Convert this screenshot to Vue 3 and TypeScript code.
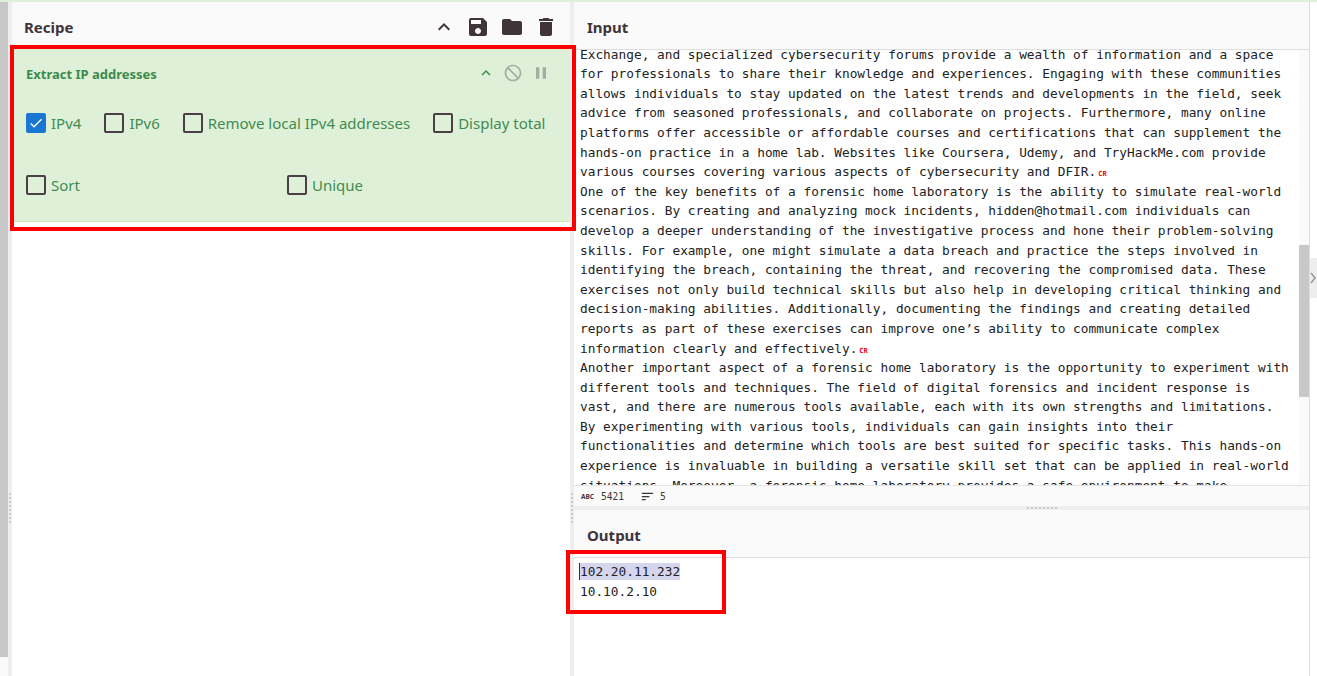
<script setup lang="ts">
const lines: { t: string; cr?: boolean }[] = [
  { t: 'Exchange, and specialized cybersecurity forums provide a wealth of information and a space' },
  { t: 'for professionals to share their knowledge and experiences. Engaging with these communities' },
  { t: 'allows individuals to stay updated on the latest trends and developments in the field, seek' },
  { t: 'advice from seasoned professionals, and collaborate on projects. Furthermore, many online' },
  { t: 'platforms offer accessible or affordable courses and certifications that can supplement the' },
  { t: 'hands-on practice in a home lab. Websites like Coursera, Udemy, and TryHackMe.com provide' },
  { t: 'various courses covering various aspects of cybersecurity and DFIR.', cr: true },
  { t: 'One of the key benefits of a forensic home laboratory is the ability to simulate real-world' },
  { t: 'scenarios. By creating and analyzing mock incidents, hidden@hotmail.com individuals can' },
  { t: 'develop a deeper understanding of the investigative process and hone their problem-solving' },
  { t: 'skills. For example, one might simulate a data breach and practice the steps involved in' },
  { t: 'identifying the breach, containing the threat, and recovering the compromised data. These' },
  { t: 'exercises not only build technical skills but also help in developing critical thinking and' },
  { t: 'decision-making abilities. Additionally, documenting the findings and creating detailed' },
  { t: 'reports as part of these exercises can improve one’s ability to communicate complex' },
  { t: 'information clearly and effectively.', cr: true },
  { t: 'Another important aspect of a forensic home laboratory is the opportunity to experiment with' },
  { t: 'different tools and techniques. The field of digital forensics and incident response is' },
  { t: 'vast, and there are numerous tools available, each with its own strengths and limitations.' },
  { t: 'By experimenting with various tools, individuals can gain insights into their' },
  { t: 'functionalities and determine which tools are best suited for specific tasks. This hands-on' },
  { t: 'experience is invaluable in building a versatile skill set that can be applied in real-world' },
  { t: 'situations. Moreover, a forensic home laboratory provides a safe environment to make' }
]
const rowOne = [
  { label: 'IPv4', checked: true },
  { label: 'IPv6', checked: false },
  { label: 'Remove local IPv4 addresses', checked: false },
  { label: 'Display total', checked: false }
]
const rowTwo = ['Sort', 'Unique']
const dots = [0, 1, 2, 3, 4, 5, 6, 7]
</script>

<template>
  <div class="page">
    <div class="strip">
      <div class="thumb"></div>
    </div>
    <div class="vgutter left">
      <i v-for="d in dots" :key="d"></i>
    </div>
    <section class="recipe">
      <header class="head">
        <h2>Recipe</h2>
        <div class="head-icons">
          <svg class="ic-chev" viewBox="0 0 24 24"><path d="M7.41 15.41L12 10.83l4.59 4.58L18 14l-6-6-6 6z" /></svg>
          <svg viewBox="0 0 24 24"><path d="M17 3H5c-1.11 0-2 .9-2 2v14c0 1.1.89 2 2 2h14c1.1 0 2-.9 2-2V7l-4-4zm-5 16c-1.66 0-3-1.34-3-3s1.34-3 3-3 3 1.34 3 3-1.34 3-3 3zm3-10H5V5h10v4z" /></svg>
          <svg viewBox="0 0 24 24"><path d="M10 4H4c-1.1 0-1.99.9-1.99 2L2 18c0 1.1.9 2 2 2h16c1.1 0 2-.9 2-2V8c0-1.1-.9-2-2-2h-8l-2-2z" /></svg>
          <svg viewBox="0 0 24 24"><path d="M6 19c0 1.1.9 2 2 2h8c1.1 0 2-.9 2-2V7H6v12zM19 4h-3.5l-1-1h-5l-1 1H5v2h14V4z" /></svg>
        </div>
      </header>
      <div class="op">
        <div class="op-head">
          <h3>Extract IP addresses</h3>
          <div class="op-icons">
            <svg class="up" viewBox="0 0 24 24"><path d="M7.41 15.41L12 10.83l4.59 4.58L18 14l-6-6-6 6z" /></svg>
            <svg viewBox="0 0 24 24"><path d="M12 2C6.48 2 2 6.48 2 12s4.48 10 10 10 10-4.48 10-10S17.52 2 12 2zm0 18c-4.42 0-8-3.58-8-8 0-1.85.63-3.55 1.69-4.9L16.9 18.31C15.55 19.37 13.85 20 12 20zm6.31-3.1L7.1 5.69C8.45 4.63 10.15 4 12 4c4.42 0 8 3.58 8 8 0 1.85-.63 3.55-1.69 4.9z" /></svg>
            <svg viewBox="0 0 24 24"><path d="M6 19h4V5H6v14zm8-14v14h4V5h-4z" /></svg>
          </div>
        </div>
        <div class="row-one">
          <label v-for="o in rowOne" :key="o.label" class="check">
            <span class="box" :class="{ on: o.checked }">
              <svg v-if="o.checked" viewBox="0 0 24 24"><path d="M9 16.17L4.83 12l-1.42 1.41L9 19 21 7l-1.41-1.41z" /></svg>
            </span>
            {{ o.label }}
          </label>
        </div>
        <div class="row-two">
          <label v-for="o in rowTwo" :key="o" class="check">
            <span class="box"></span>
            {{ o }}
          </label>
        </div>
      </div>
    </section>
    <div class="vgutter mid">
      <i v-for="d in dots" :key="d"></i>
    </div>
    <main class="io">
      <div class="input">
        <header class="head io-head"><h2>Input</h2></header>
        <div class="input-body">
          <div class="text-clip">
            <div class="text">
              <div v-for="(l, i) in lines" :key="i" class="line">{{ l.t }}<span v-if="l.cr" class="cr">CR</span></div>
            </div>
          </div>
          <div class="scroll"><div class="scroll-thumb"></div></div>
        </div>
        <footer class="status">
          <span class="abc">ABC</span>
          <span class="num">5421</span>
          <svg class="sort" viewBox="0 0 24 24"><path d="M3 18h6v-2H3v2zM3 6v2h18V6H3zm0 7h12v-2H3v2z" /></svg>
          <span class="num">5</span>
        </footer>
      </div>
      <div class="hgutter">
        <i v-for="d in dots" :key="d"></i>
      </div>
      <div class="output">
        <header class="head io-head"><h2>Output</h2></header>
        <div class="out-text">
          <div class="line first"><span class="sel">102.20.11.232</span></div>
          <div class="line">10.10.2.10</div>
        </div>
      </div>
    </main>
    <aside class="rail">
      <div class="tab">
        <svg viewBox="0 0 7 14"><path d="M1 2l4 5-4 5" /></svg>
      </div>
    </aside>
    <div class="mark mark-op"></div>
    <div class="mark mark-out"></div>
  </div>
</template>

<style>
html, body { margin: 0; overflow: hidden; background: #fff; }
</style>

<style scoped>
.page {
  position: relative;
  display: flex;
  width: 1317px;
  height: 676px;
  overflow: hidden;
  box-sizing: border-box;
  border-top: 2px solid #dff0d8;
  font-family: "Noto Sans", "Open Sans", sans-serif;
  color: #3f3439;
  background: #fff;
}
h2, h3 { margin: 0; }
.strip { width: 8px; margin-top: -2px; background: #fafafa; flex: none; }
.thumb { height: 657px; background: #c8c8c8; }
.vgutter {
  flex: none;
  background: #eee;
  display: flex;
  flex-direction: column;
  align-items: center;
  gap: 2px;
  padding-top: 491px;
  box-sizing: border-box;
}
.vgutter i { width: 2px; height: 2px; background: #ccc; }
.vgutter.left { width: 4px; }
.vgutter.mid { width: 4px; }
.recipe { width: 558px; flex: none; background: #fff; }
.head {
  height: 47px;
  display: flex;
  align-items: center;
  justify-content: space-between;
  background: #fafafa;
  box-sizing: border-box;
  padding: 2px 12px 0 12px;
}
.head h2 { font-size: 15px; font-weight: 700; color: #3f3439; }
.head-icons { display: flex; align-items: center; gap: 10px; }
.head-icons svg { width: 24px; height: 24px; fill: #3f3439; }
.op {
  height: 173px;
  box-sizing: border-box;
  background: #dff0d8;
  border-bottom: 1px solid #cfe8b9;
  padding: 0 14px;
  color: #3c8b4b;
}
.op-head {
  height: 51px;
  display: flex;
  align-items: center;
  justify-content: space-between;
}
.op-head h3 { font-size: 13px; font-weight: 700; color: #3c8b4b; margin-top: -2px; }
.op-icons { display: flex; align-items: center; gap: 8px; margin-right: 5px; margin-top: -3px; }
.op-icons svg { width: 20px; height: 20px; fill: #9eb0a4; }
.op-icons svg.up { fill: #3c8b4b; width: 18px; height: 18px; }
.row-one { display: flex; align-items: flex-start; gap: 23px; height: 62px; padding-top: 13px; box-sizing: border-box; }
.row-two { display: grid; grid-template-columns: 261px 1fr; align-items: start; padding-top: 13px; }
.check { display: flex; align-items: center; gap: 5px; font-size: 15px; line-height: 20px; color: #3f8c50; }
.box {
  width: 20px;
  height: 20px;
  box-sizing: border-box;
  border: 2px solid #4a3f44;
  border-radius: 2px;
  display: flex;
  align-items: center;
  justify-content: center;
  flex: none;
}
.box.on { background: #1976d2; border-color: #1976d2; }
.box svg { width: 16px; height: 16px; fill: #fff; }
.io { width: 735px; flex: none; display: flex; flex-direction: column; border-right: 1px solid #ddd; box-sizing: content-box; }
.input { height: 504px; display: flex; flex-direction: column; flex: none; }
.io-head { border-bottom: 1px solid #ddd; height: 48px; padding-left: 13px; }
.input-body { height: 435px; display: flex; position: relative; flex: none; }
.text-clip { flex: 1; overflow: hidden; }
.text { margin-top: -5.4px; padding-left: 6px; }
.line {
  font-family: "DejaVu Sans Mono", monospace;
  font-size: 12.8px;
  line-height: 19.6px;
  height: 19.6px;
  white-space: pre;
  color: #222;
}
.cr { color: #e00; font-size: 7px; font-weight: 700; line-height: 0; margin-left: 2px; letter-spacing: 0; }
.scroll { width: 10px; background: #fafafa; flex: none; }
.scroll-thumb { height: 152px; margin-top: 195px; background: #c8c8c8; }
.status {
  height: 21px;
  display: flex;
  align-items: center;
  padding-left: 7px;
  background: #fafafa;
  border-top: 1px solid #e4e4e4;
  box-sizing: border-box;
  color: #3f3439;
}
.abc { font-size: 6.5px; font-weight: 700; letter-spacing: 0; width: 20px; flex: none; }
.num { font-family: "DejaVu Sans Mono", monospace; font-size: 9.6px; }
.sort { width: 15px; height: 15px; fill: #3f3439; margin: 0 5px 0 16px; }
.hgutter {
  height: 4px;
  flex: none;
  background: #eee;
  display: flex;
  justify-content: center;
  align-items: center;
  gap: 2px;
  padding-left: 200px;
}
.hgutter i { width: 2px; height: 2px; background: #ccc; }
.out-text { padding: 4px 6px; }
.sel { background: #d5d5ee; display: inline-block; height: 17px; line-height: 17px; box-shadow: -1px 0 0 #333; }
.rail { flex: 1; background: #fff; }
.tab {
  margin-top: 256px;
  height: 40px;
  background: #eee;
  display: flex;
  align-items: center;
  justify-content: center;
}
.tab svg { width: 7px; height: 14px; fill: none; stroke: #9a9a9a; stroke-width: 1.6; }
.mark {
  position: absolute;
  box-sizing: border-box;
  border: 4px solid #f00;
  pointer-events: none;
}
.mark-op { left: 10px; top: 43px; width: 566px; height: 186px; }
.mark-out { left: 566px; top: 548px; width: 160px; height: 64px; }
</style>
